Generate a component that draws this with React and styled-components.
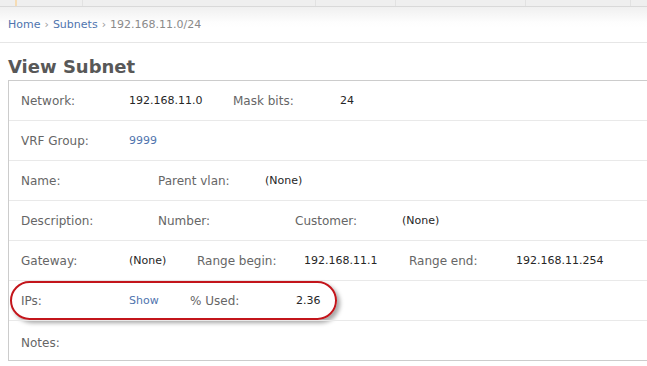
import React from "react";
import styled, { createGlobalStyle } from "styled-components";

const GlobalStyle = createGlobalStyle`
  html, body {
    margin: 0;
    padding: 0;
    background: #fff;
    overflow: hidden;
  }
  body {
    font-family: "DejaVu Sans", Verdana, sans-serif;
  }
`;

const navTabs = [83, 233, 80, 130, 105, 40];

const rows = [
  [
    { label: "Network:", value: "192.168.11.0", valueWidth: 104 },
    { label: "Mask bits:", value: "24", labelWidth: 107 },
  ],
  [{ label: "VRF Group:", value: "9999", link: true }],
  [
    { label: "Name:", value: "", valueWidth: 29 },
    { label: "Parent vlan:", value: "(None)", labelWidth: 107 },
  ],
  [
    { label: "Description:", value: "", valueWidth: 29 },
    { label: "Number:", value: "", valueWidth: 29, labelWidth: 108 },
    { label: "Customer:", value: "(None)", labelWidth: 107 },
  ],
  [
    { label: "Gateway:", value: "(None)", valueWidth: 68 },
    { label: "Range begin:", value: "192.168.11.1", valueWidth: 105, labelWidth: 107 },
    { label: "Range end:", value: "192.168.11.254", labelWidth: 107 },
  ],
  [
    { label: "IPs:", value: "Show", link: true, valueWidth: 61 },
    { label: "% Used:", value: "2.36", labelWidth: 106 },
  ],
];

const App = () => {
  return (
    <>
      <GlobalStyle />
      <Page>
        <TopNav>
          {navTabs.map((w, i) => (
            <NavTab key={i} $width={w} $active={i === 0} />
          ))}
        </TopNav>
        <CrumbBar>
          <CrumbLink>Home</CrumbLink>
          <CrumbSep>›</CrumbSep>
          <CrumbLink>Subnets</CrumbLink>
          <CrumbSep>›</CrumbSep>
          <CrumbCurrent>192.168.11.0/24</CrumbCurrent>
        </CrumbBar>
        <Title>View Subnet</Title>
        <DetailBox>
          {rows.map((cells, i) => (
            <Row key={i}>
              {cells.map((c, j) => (
                <React.Fragment key={j}>
                  <Label $width={c.labelWidth || 108}>{c.label}</Label>
                  <Value $width={c.valueWidth} $link={c.link}>
                    {c.value}
                  </Value>
                </React.Fragment>
              ))}
              {i === 5 && <Highlight />}
            </Row>
          ))}
          <NotesRow>
            <Label $width={108}>Notes:</Label>
          </NotesRow>
        </DetailBox>
      </Page>
    </>
  );
};

const Page = styled.div`
  width: 647px;
  height: 366px;
  overflow: hidden;
`;

const TopNav = styled.div`
  display: flex;
  height: 6px;
  background: #efefef;
  border-bottom: 1px solid #d9d9d9;
`;

const NavTab = styled.div`
  flex: 0 0 ${(p) => p.$width}px;
  height: 100%;
  border-right: 1px solid #e2e2e2;
  box-sizing: border-box;
  background: ${(p) =>
    p.$active
      ? "linear-gradient(to right, #efefef 15px, #f6dcb4 15px, #f6dcb4 17px, #efefef 17px)"
      : "#efefef"};
`;

const CrumbBar = styled.div`
  display: flex;
  align-items: center;
  height: 35px;
  padding: 0 8px;
  font-size: 11px;
  background: linear-gradient(to bottom, #f0f0f0 0px, #fdfdfd 15px, #fff 20px);
  border-bottom: 1px solid #e6e6e6;
`;

const CrumbLink = styled.a`
  color: #4f74ae;
  text-decoration: none;
  cursor: pointer;
`;

const CrumbSep = styled.span`
  color: #999;
  margin: 0 4px;
`;

const CrumbCurrent = styled.span`
  color: #8a8a8a;
`;

const Title = styled.h1`
  margin: 0;
  padding: 10px 8px 0;
  height: 27px;
  font-size: 18px;
  font-weight: bold;
  color: #585858;
  line-height: 27px;
`;

const DetailBox = styled.div`
  margin-left: 8px;
  border: 1px solid #cccccc;
  border-right: none;
`;

const Row = styled.div`
  position: relative;
  display: flex;
  align-items: center;
  height: 40px;
  padding-left: 12px;
  box-sizing: border-box;
  border-top: 1px solid #e9e9e9;

  &:first-child {
    height: 39px;
    border-top: none;
  }
`;

const NotesRow = styled(Row)`
  align-items: flex-start;
  padding-top: 15px;
`;

const Label = styled.span`
  flex: 0 0 ${(p) => p.$width}px;
  font-size: 12px;
  color: #666;
  white-space: nowrap;
`;

const Value = styled.span`
  flex: 0 0 ${(p) => (p.$width ? `${p.$width}px` : "auto")};
  font-size: 11px;
  color: ${(p) => (p.$link ? "#4f74ae" : "#262626")};
  white-space: nowrap;
  cursor: ${(p) => (p.$link ? "pointer" : "default")};
`;

const Highlight = styled.div`
  position: absolute;
  left: 1px;
  top: 0;
  width: 327px;
  height: 39px;
  box-sizing: border-box;
  border: 2px solid #c3151b;
  border-radius: 20px;
  box-shadow: 3px 3px 4px rgba(0, 0, 0, 0.35);
  pointer-events: none;
`;

export default App;
